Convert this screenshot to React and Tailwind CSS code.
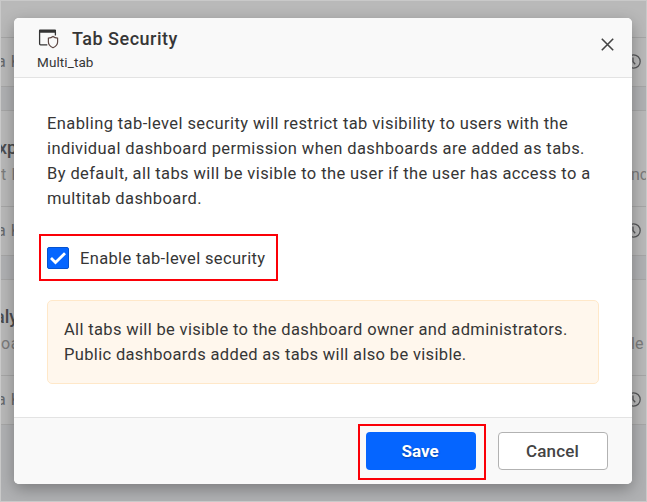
const CARDS = [
  { title: '', desc: '', owner: 'a K', tail: '' },
  { title: 'xp', titleShift: '-ml-[3px]', desc: 't l', owner: 'a K', tail: 'nc' },
  { title: 'aly', titleShift: '-ml-[6px]', desc: 'oa', owner: 'a K', tail: 'le' },
];

function Clock() {
  return (
    <svg className="-mt-[2px] h-[15px] w-[15px]" viewBox="0 0 15 15" fill="none" stroke="#565759" strokeWidth="1.3">
      <circle cx="7.5" cy="7.5" r="6.7" />
      <path d="M7 3.5v4.2l2.2 2.5" />
    </svg>
  );
}

function BackgroundCard({ title, titleShift, desc, owner, tail, first }) {
  return (
    <div className={`flex shrink-0 flex-col border-b border-[#a6a6a6] bg-[#b9b9b9] ${first ? 'h-[86px]' : 'mt-[23px] h-[146px] border-t'}`}>
      <div className="flex flex-1 flex-col">
        {title && (
          <>
            <div className={`mt-[24px] h-[25px] text-[18px] font-medium leading-[25px] text-[#4b4c4f] ${titleShift}`}>{title}</div>
            <div className="mt-[3px] flex h-6 justify-between text-[16px] leading-6 text-[#7b7b7b]">
              <span className="tracking-[0.6px]">{desc}</span>
              <span className="w-[15px]">{tail}</span>
            </div>
          </>
        )}
      </div>
      <div className="flex h-[49px] items-center justify-between border-t border-[#a6a6a6] pr-[5px] text-[16px] text-[#66686b]">
        <span className="-ml-[4px] -mt-px tracking-[0.6px]">{owner}</span>
        <Clock />
      </div>
    </div>
  );
}

export default function App() {
  return (
    <div className="relative h-[502px] w-[647px] overflow-hidden border border-[#c9c9c9] bg-[#b0b1b3] font-['Roboto',sans-serif]">
      <div className="flex h-[500px] flex-col">
        {CARDS.map((card, i) => (
          <BackgroundCard key={i} {...card} first={i === 0} />
        ))}
      </div>

      <div className="absolute left-[13px] top-[17px] flex h-[466px] w-[618px] flex-col overflow-hidden rounded-[5px] bg-white text-[#363636] shadow-[0_5px_16px_rgba(0,0,0,0.3)]">
        <header className="flex h-[60px] shrink-0 justify-between border-b border-[#e3e3e3] bg-[#f9f9f9] pl-[23px] pr-[18px]">
          <div>
            <div className="mt-[8px] flex h-[25px] items-center">
              <svg className="h-[21px] w-[22px]" viewBox="0 0 22 21" fill="none">
                <path d="M10.3 16.8H3.6a1 1 0 0 1-1-1V3" stroke="#343434" strokeWidth="1.3" />
                <path d="M18.4 4v3.6" stroke="#343434" strokeWidth="1.3" />
                <path d="M2 2.3A.9.9 0 0 1 2.9 1.4h15.2a.9.9 0 0 1 .9.9v2.4H2z" fill="#343434" />
                <path d="M16 8.5c1.3 1.1 2.8 1.6 4.6 1.7v3.7c0 2.6-1.8 4.5-4.6 5.8-2.8-1.3-4.6-3.2-4.6-5.8v-3.7c1.8-.1 3.3-.6 4.6-1.7z" stroke="#5f4a46" strokeWidth="1.2" />
              </svg>
              <h1 className="ml-[13px] text-[18px] font-medium leading-[25px] tracking-[0.5px]">Tab Security</h1>
            </div>
            <div className="mt-[2px] text-[13.5px] leading-[18px] tracking-[0.1px]">Multi_tab</div>
          </div>
          <svg className="mt-[20px] h-[13px] w-[13px]" viewBox="0 0 13 13" fill="none" stroke="#444" strokeWidth="1.6">
            <path d="M.8.8l11.4 11.4M12.2.8L.8 12.2" />
          </svg>
        </header>

        <main className="flex-1 pl-[25px] pr-[33px] pt-[33px] text-[16.5px] leading-[25px] tracking-[0.34px]">
          <p className="whitespace-nowrap pl-[8px] tracking-[0.4px]">
            Enabling tab-level security will restrict tab visibility to users with the<br />
            individual dashboard permission when dashboards are added as tabs.<br />
            By default, all tabs will be visible to the user if the user has access to a<br />
            multitab dashboard.
          </p>
          <label className="mt-[23px] flex h-[47px] w-[239px] items-center border-2 border-[#fb0007] pl-[6px]">
            <span className="flex h-[22px] w-[22px] items-center justify-center rounded-[2px] border border-[#0653cf] bg-[#0565ff]">
              <svg className="h-[14px] w-[18px]" viewBox="0 0 18 14" fill="none" stroke="#fff" strokeWidth="2.8">
                <path d="M2 7l4.5 4.5L16 2.2" />
              </svg>
            </span>
            <span className="ml-[11px] mt-px whitespace-nowrap">Enable tab-level security</span>
          </label>
          <div className="ml-[8px] mt-[19px] h-[84px] whitespace-nowrap rounded-[5px] border border-[#ffe8c9] bg-[#fff7ed] pl-[16px] pt-[16px]">
            All tabs will be visible to the dashboard owner and administrators.<br />
            Public dashboards added as tabs will also be visible.
          </div>
        </main>

        <footer className="flex h-[67px] shrink-0 items-start justify-end border-t border-[#e3e3e3] bg-[#f9f9f9] pr-[24px] pt-[6px] text-[17px] font-medium">
          <div className="border-2 border-[#fb0007] p-[6px] pr-[8px] pb-[8px]">
            <button className="h-[38px] w-[110px] rounded-[4px] bg-[#0565ff] pr-[2px] pt-[2px] font-bold text-white [text-shadow:0_1px_2px_rgba(0,0,0,0.35)]">Save</button>
          </div>
          <button className="ml-[12px] mt-[8px] h-[38px] w-[110px] rounded-[4px] border border-[#b2b2b2] bg-white pr-px pt-[2px] tracking-[0.2px] text-[#444]">Cancel</button>
        </footer>
      </div>
    </div>
  );
}
